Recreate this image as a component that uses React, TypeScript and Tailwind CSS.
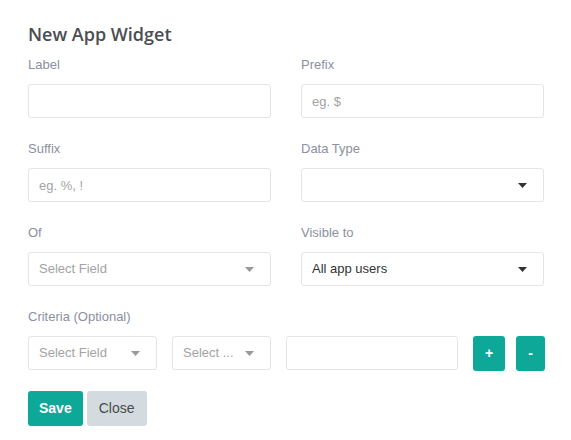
import React from "react";

const label = "block text-[13px] leading-[16px] text-[#8b90a0] mb-[11px]";
const box =
  "h-[34px] w-full border border-[#e2e5e9] rounded-[3px] bg-white px-[10px] text-[13px] text-[#333] outline-none placeholder:text-[#a3a3a3]";

const Caret: React.FC<{ dark?: boolean }> = ({ dark }) => (
  <svg width="9" height="5" viewBox="0 0 9 5" className="shrink-0">
    <path d="M0 0 L9 0 L4.5 5 Z" fill={dark ? "#333" : "#999"} />
  </svg>
);

const FakeSelect: React.FC<{ text?: string; placeholder?: boolean; dark?: boolean; className?: string }> = ({
  text,
  placeholder,
  dark,
  className,
}) => (
  <div
    className={`h-[34px] border border-[#e2e5e9] rounded-[3px] bg-white flex items-center justify-between pl-[10px] pr-[16px] text-[13px] ${
      placeholder ? "text-[#a3a3a3]" : "text-[#333]"
    } ${className || "w-full"}`}
  >
    <span className="whitespace-nowrap">{text}</span>
    <Caret dark={dark} />
  </div>
);

export default function App() {
  return (
    <div
      className="w-[571px] h-[440px] bg-white pl-[28px] pt-[23px]"
      style={{ fontFamily: '"Liberation Sans", Arial, sans-serif' }}
    >
      <h2
        className="text-[18px] leading-[22px] font-semibold text-[#4a4d52] mb-[12px]"
        style={{ fontFamily: '"Open Sans", sans-serif' }}
      >
        New App Widget
      </h2>

      <div className="grid grid-cols-[243px_243px] gap-x-[30px] gap-y-[23px]">
        <div>
          <label className={label}>Label</label>
          <input className={box} />
        </div>
        <div>
          <label className={label}>Prefix</label>
          <input className={box} placeholder="eg. $" />
        </div>
        <div>
          <label className={label}>Suffix</label>
          <input className={box} placeholder="eg. %, !" />
        </div>
        <div>
          <label className={label}>Data Type</label>
          <FakeSelect text="" dark />
        </div>
        <div>
          <label className={label}>Of</label>
          <FakeSelect text="Select Field" placeholder />
        </div>
        <div>
          <label className={label}>Visible to</label>
          <FakeSelect text="All app users" dark />
        </div>
      </div>

      <div className="mt-[23px]">
        <label className={label}>Criteria (Optional)</label>
        <div className="flex items-start">
          <FakeSelect text="Select Field" placeholder className="w-[129px]" />
          <FakeSelect text="Select ..." placeholder className="w-[99px] ml-[15px]" />
          <input className={`${box} !w-[172px] ml-[15px]`} />
          <button className="ml-[15px] w-[32px] h-[35px] rounded-[3px] bg-[#0da898] text-white font-bold text-[14px]">
            +
          </button>
          <button className="ml-[11px] w-[29px] h-[35px] rounded-[3px] bg-[#0da898] text-white font-bold text-[14px]">
            -
          </button>
        </div>
      </div>

      <div className="flex gap-[4px] mt-[20px]">
        <button className="h-[35px] px-[11px] rounded-[3px] bg-[#0da898] text-white font-bold text-[14px]">
          Save
        </button>
        <button className="h-[35px] px-[12px] rounded-[3px] bg-[#d4dbe0] text-[#4a4a4a] text-[14px]">
          Close
        </button>
      </div>
    </div>
  );
}
